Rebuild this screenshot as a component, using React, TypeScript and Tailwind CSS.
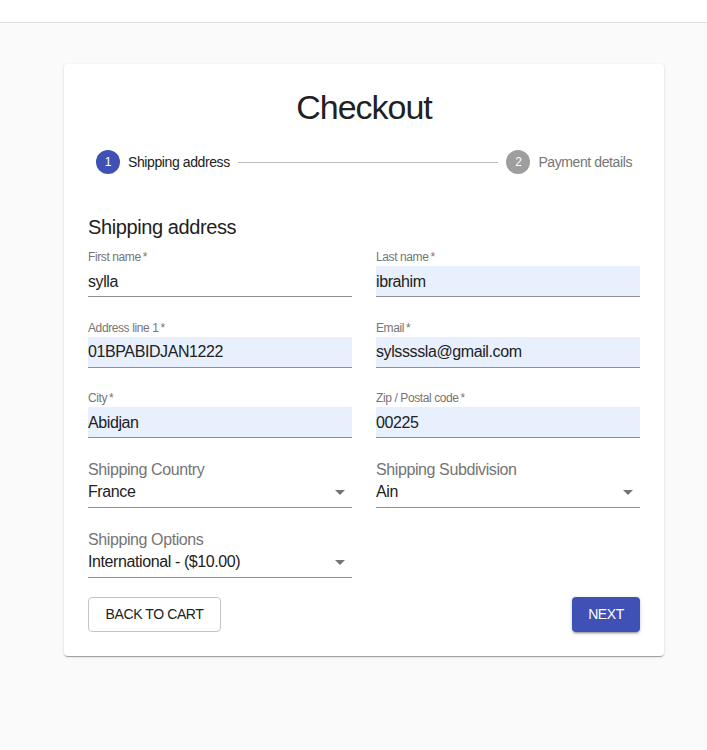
import React from 'react';

interface TextFieldProps {
  label: string;
  value: string;
  autofill?: boolean;
}

const TextField: React.FC<TextFieldProps> = ({ label, value, autofill }) => (
  <div className="flex flex-col">
    <label className="text-[12px] leading-[12px] text-[#757575]">{label}&thinsp;*</label>
    <div className={`mt-[3px] h-[31px] flex items-center border-b border-[#8f8f8f] ${autofill ? 'bg-[#e8f0fe]' : ''}`}>
      <span className="text-[16px] leading-[19px] text-[#212121]">{value}</span>
    </div>
  </div>
);

interface SelectFieldProps {
  label: string;
  value: string;
}

const SelectField: React.FC<SelectFieldProps> = ({ label, value }) => (
  <div className="flex flex-col">
    <label className="text-[16px] leading-[16px] text-[#757575]">{label}</label>
    <div className="mt-1 pb-[6px] border-b border-[#8f8f8f]">
      <div className="h-[19px] flex items-center justify-between">
        <span className="text-[16px] leading-[19px] text-[#212121]">{value}</span>
        <svg viewBox="0 0 24 24" className="w-6 h-6 shrink-0" fill="#757575">
          <path d="M7 10l5 5 5-5z" />
        </svg>
      </div>
    </div>
  </div>
);

const App: React.FC = () => {
  return (
    <div className="min-h-[750px] bg-[#fafafa] tracking-tight font-['Liberation_Sans',Arial,sans-serif]">
      <div className="h-[23px] bg-white border-b border-[#e0e0e0]" />

      <div className="ml-16 mt-[41px] w-[600px] bg-white rounded shadow-[0_2px_1px_-1px_rgba(0,0,0,0.2),0_1px_1px_0_rgba(0,0,0,0.14),0_1px_3px_0_rgba(0,0,0,0.12)] px-6 pt-[22px] pb-6">
        <h1 className="text-[34px] leading-[42px] text-center text-[#212121] tracking-[-1px]">Checkout</h1>

        {/* stepper */}
        <div className="mt-[22px] px-2 flex items-center h-6">
          <div className="w-6 h-6 rounded-full bg-[#3f51b5] flex items-center justify-center text-white text-[12px] leading-none">1</div>
          <span className="ml-2 text-[14px] text-[#212121]">Shipping address</span>
          <div className="flex-1 mx-2 h-px bg-[#bdbdbd]" />
          <div className="w-6 h-6 rounded-full bg-[#9e9e9e] flex items-center justify-center text-white text-[12px] leading-none">2</div>
          <span className="ml-2 text-[14px] text-[#757575]">Payment details</span>
        </div>

        <h2 className="mt-[37px] text-[20px] leading-[32px] text-[#212121]">Shipping address</h2>

        <div className="mt-2 grid grid-cols-2 gap-x-6 gap-y-[24.5px]">
          <TextField label="First name" value="sylla" />
          <TextField label="Last name" value="ibrahim" autofill />
          <TextField label="Address line 1" value="01BPABIDJAN1222" autofill />
          <TextField label="Email" value="sylssssla@gmail.com" autofill />
          <TextField label="City" value="Abidjan" autofill />
          <TextField label="Zip / Postal code" value="00225" autofill />
        </div>

        <div className="mt-6 grid grid-cols-2 gap-x-6 gap-y-6">
          <SelectField label="Shipping Country" value="France" />
          <SelectField label="Shipping Subdivision" value="Ain" />
          <SelectField label="Shipping Options" value="International - ($10.00)" />
        </div>

        <div className="mt-[19px] flex justify-between">
          <button type="button" className="w-[133px] h-[35px] rounded border border-[#c4c4c4] text-[14px] text-[#212121] uppercase">
            Back to cart
          </button>
          <button type="button" className="w-[68px] h-[35px] rounded bg-[#3f51b5] text-white text-[14px] uppercase shadow-[0_3px_1px_-2px_rgba(0,0,0,0.2),0_2px_2px_0_rgba(0,0,0,0.14),0_1px_5px_0_rgba(0,0,0,0.12)]">
            Next
          </button>
        </div>
      </div>
    </div>
  );
};

export default App;
